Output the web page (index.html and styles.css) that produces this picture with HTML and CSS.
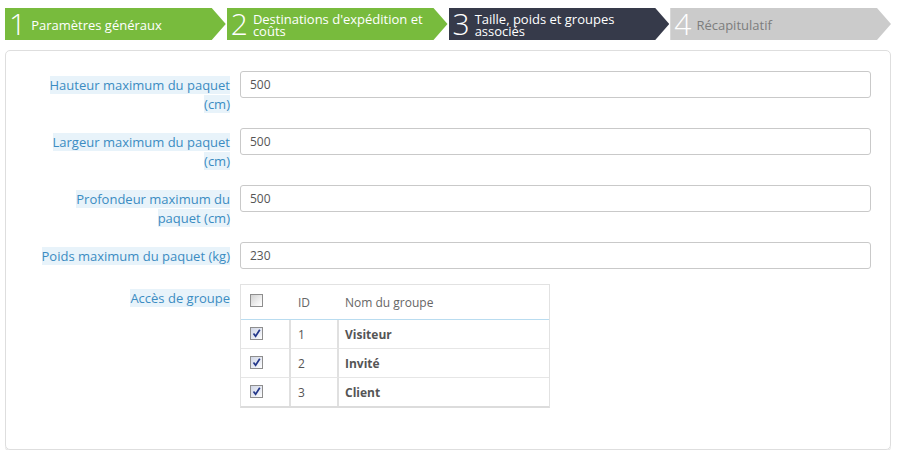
FILE: index.html
```html
<!DOCTYPE html>
<html lang="fr">
<head>
<meta charset="utf-8">
<title>Transporteur</title>
<link rel="stylesheet" href="styles.css">
</head>
<body>
<div class="page">
  <ol class="steps">
    <li class="step done"><span class="num">1</span><span class="txt">Paramètres généraux</span></li>
    <li class="step done"><span class="num">2</span><span class="txt">Destinations d'expédition et coûts</span></li>
    <li class="step current"><span class="num">3</span><span class="txt">Taille, poids et groupes associés</span></li>
    <li class="step todo"><span class="num">4</span><span class="txt">Récapitulatif</span></li>
  </ol>

  <div class="panel">
    <div class="row">
      <div class="lab"><span>Hauteur maximum du paquet (cm)</span></div>
      <div class="ctl"><input class="inp" type="text" value="500"></div>
    </div>
    <div class="row">
      <div class="lab"><span>Largeur maximum du paquet (cm)</span></div>
      <div class="ctl"><input class="inp" type="text" value="500"></div>
    </div>
    <div class="row">
      <div class="lab"><span>Profondeur maximum du paquet (cm)</span></div>
      <div class="ctl"><input class="inp" type="text" value="500"></div>
    </div>
    <div class="row">
      <div class="lab"><span>Poids maximum du paquet (kg)</span></div>
      <div class="ctl"><input class="inp" type="text" value="230"></div>
    </div>
    <div class="row">
      <div class="lab"><span>Accès de groupe</span></div>
      <div class="ctl">
        <table class="grp">
          <thead>
            <tr>
              <th class="c1"><span class="cb"></span></th>
              <th class="c2">ID</th>
              <th class="c3">Nom du groupe</th>
            </tr>
          </thead>
          <tbody>
            <tr>
              <td class="c1"><span class="cb on"><svg viewBox="0 0 11 11" width="11" height="11"><path d="M2.5 5.5 L4.6 8.3 L8.8 1.8" fill="none" stroke="#23378a" stroke-width="1.7"/></svg></span></td>
              <td class="c2">1</td>
              <td class="c3"><b>Visiteur</b></td>
            </tr>
            <tr>
              <td class="c1"><span class="cb on"><svg viewBox="0 0 11 11" width="11" height="11"><path d="M2.5 5.5 L4.6 8.3 L8.8 1.8" fill="none" stroke="#23378a" stroke-width="1.7"/></svg></span></td>
              <td class="c2">2</td>
              <td class="c3"><b>Invité</b></td>
            </tr>
            <tr>
              <td class="c1"><span class="cb on"><svg viewBox="0 0 11 11" width="11" height="11"><path d="M2.5 5.5 L4.6 8.3 L8.8 1.8" fill="none" stroke="#23378a" stroke-width="1.7"/></svg></span></td>
              <td class="c2">3</td>
              <td class="c3"><b>Client</b></td>
            </tr>
          </tbody>
        </table>
      </div>
    </div>
  </div>
</div>
</body>
</html>
```

FILE: styles.css
```css
html, body {
  margin: 0;
  padding: 0;
  background: #fff;
  font-family: "Open Sans", "DejaVu Sans", sans-serif;
}

.page {
  width: 886px;
  padding: 8px 0 0 5px;
}

.steps {
  display: flex;
  gap: 1px;
  list-style: none;
  margin: 0;
  padding: 0;
  height: 32px;
}

.step {
  box-sizing: border-box;
  width: 221px;
  height: 32px;
  display: flex;
  align-items: center;
  padding-right: 18px;
  color: #fff;
  clip-path: polygon(0 0, calc(100% - 14px) 0, 100% 50%, calc(100% - 14px) 100%, 0 100%);
}

.step.done { background: #78bb3d; }
.step.current { background: #363a4a; }
.step.todo { background: #cbcbcb; color: #7d7d7d; }
.step.todo .num { color: #fff; }

.num {
  font-size: 30px;
  font-weight: 300;
  line-height: 32px;
  padding: 0 5px 0 4px;
  flex: none;
}

.txt {
  font-size: 13px;
  line-height: 12px;
  padding-top: 1px;
}

.panel {
  margin-top: 10px;
  border: 1px solid #dedede;
  border-radius: 5px;
  box-shadow: 0 2px 0 #e8e8e8;
  padding: 20px 19px 26px 15px;
}

.row {
  display: grid;
  grid-template-columns: 209px 631px;
  column-gap: 10px;
  margin-bottom: 15px;
}

.lab {
  box-sizing: border-box;
  padding: 5px 0 0 9px;
  text-align: right;
  font-size: 13px;
  line-height: 18.57px;
}

.lab span {
  background: #e8f3fa;
  color: #3b8cc2;
}

.inp {
  display: block;
  box-sizing: border-box;
  width: 100%;
  height: 27px;
  margin: 0;
  padding: 0 9px;
  border: 1px solid #c9c9c9;
  border-radius: 3px;
  background: #fff;
  font-family: "Open Sans", "DejaVu Sans", sans-serif;
  font-size: 12px;
  color: #555;
  outline: none;
}

.grp {
  border-collapse: separate;
  border-spacing: 0;
  width: 310px;
  border: 1px solid #e2e2e2;
  border-bottom: 2px solid #dcdcdc;
  font-size: 12px;
  color: #555;
}

.grp th {
  height: 34px;
  padding: 0 6px;
  text-align: left;
  font-weight: normal;
  color: #666;
  border-bottom: 1px solid #b9dcf0;
  vertical-align: middle;
}

.grp td {
  height: 28px;
  padding: 0 6px;
  vertical-align: middle;
  border-top: 1px solid #e6e6e6;
}

.grp tbody tr:first-child td { border-top: none; }

.grp .c1 { width: 31px; padding-left: 9px; padding-right: 8px; }
.grp .c2 { width: 31px; }
.grp td.c1, .grp td.c2 { border-right: 2px solid #e0e0e0; }
.grp td.c2, .grp th.c2 { padding-left: 7px; padding-right: 8px; }

.grp th .cb { margin-top: -3px; }
.grp td .cb { margin-top: -2px; }

.grp b {
  font-weight: 700;
  color: #555;
}

.cb {
  box-sizing: border-box;
  display: block;
  width: 13px;
  height: 13px;
  border: 1px solid #8e8e8e;
  background: linear-gradient(135deg, #d2d2d2 0%, #f4f4f4 70%, #ffffff 100%);
}

.cb.on {
  background: linear-gradient(135deg, #d0d6e6 0%, #eef0f6 70%, #ffffff 100%);
}

.cb svg { display: block; margin: 0; }
```
